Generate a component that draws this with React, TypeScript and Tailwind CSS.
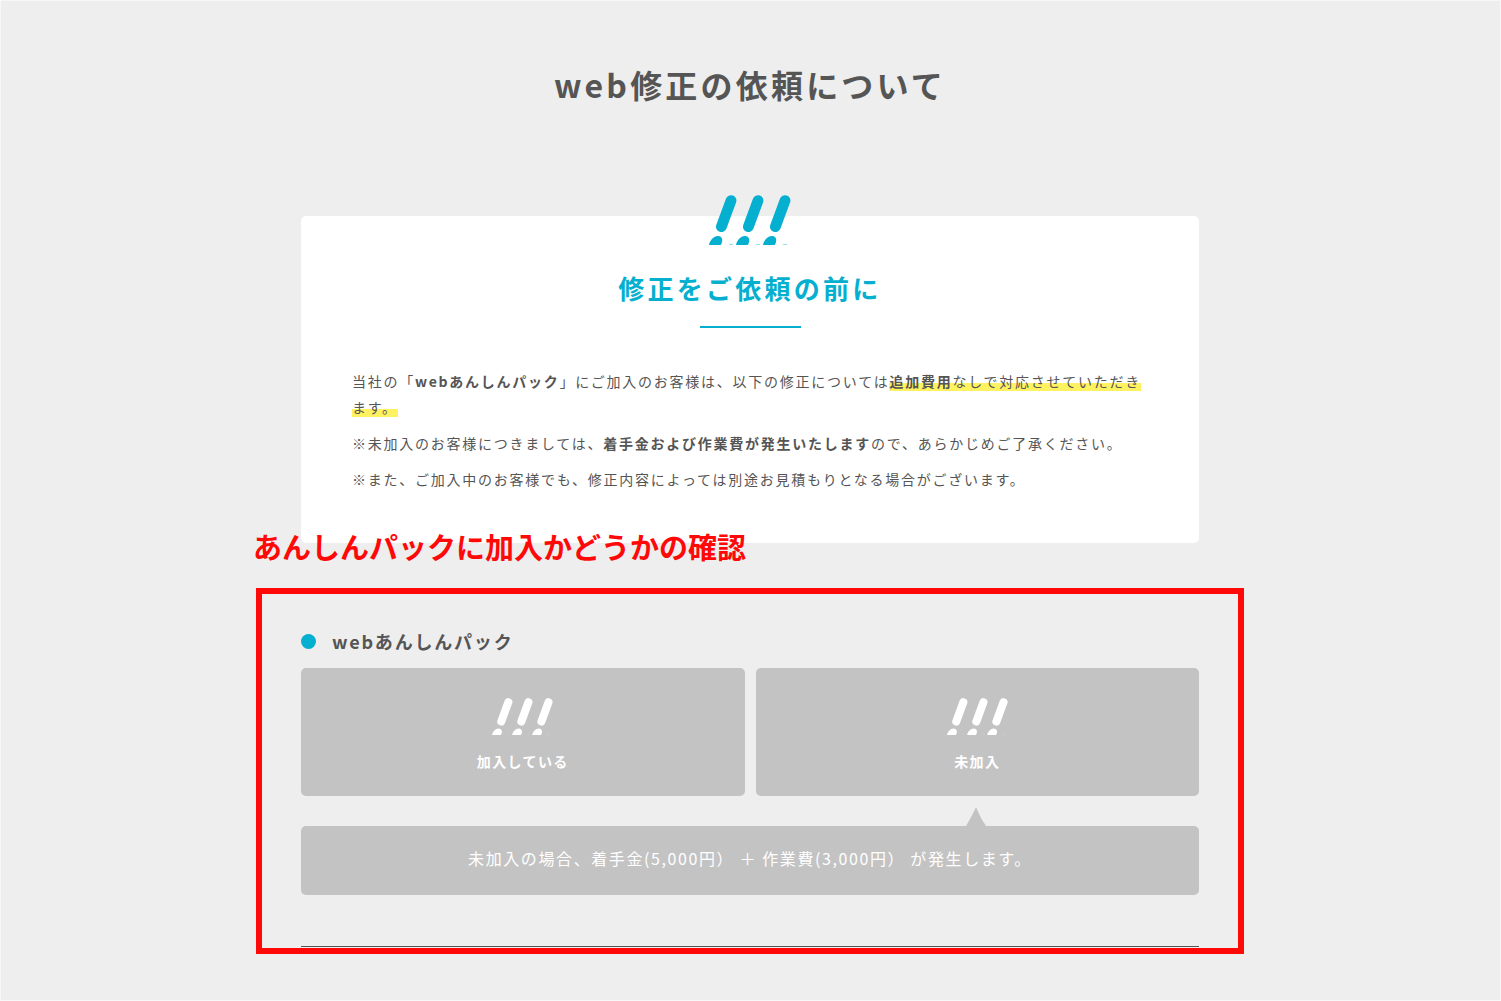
const notes = [
  {
    id: 'pack',
    body: (
      <>
        当社の「<b>webあんしんパック</b>
        」にご加入のお客様は、以下の修正については
        <span className="bg-linear-to-b from-transparent from-60% to-[#fff261] to-60%">
          <b>追加費用</b>なしで対応させていただきます。
        </span>
      </>
    ),
  },
  {
    id: 'fee',
    body: (
      <>
        ※未加入のお客様につきましては、<b>着手金および作業費が発生いたします</b>
        ので、あらかじめご了承ください。
      </>
    ),
  },
  {
    id: 'estimate',
    body: '※また、ご加入中のお客様でも、修正内容によっては別途お見積もりとなる場合がございます。',
  },
]

const choices = ['加入している', '未加入']

const MarksIcon = ({ className }: { className: string }) => (
  <svg viewBox="0 0 82 50" className={className} aria-hidden="true">
    {[0, 27, 54].map((x) => (
      <g key={x} transform={`translate(${x} 0)`}>
        <path
          d="M22 5.6 12.4 31.7"
          fill="none"
          stroke="currentColor"
          strokeWidth="10.8"
          strokeLinecap="round"
        />
        <path
          d="M0 50C.8 45.5 4.6 41 8.8 41 12 41 13.6 43.2 13.2 46 13 47.6 12.4 49 11.7 50Z"
          fill="currentColor"
        />
        <path d="M20 49.6h4v.4h-4Z" fill="currentColor" />
      </g>
    ))}
  </svg>
)

const App = () => {
  return (
    <main className="min-h-screen border border-[#f8f8f8] bg-[#eeeeee] pt-[59px] pr-16 pb-11 pl-[63px] font-['Noto_Sans_CJK_JP',sans-serif] text-[#555555]">
      <h1 className="text-center text-[32px] leading-[48px] font-bold tracking-widest">
        web修正の依頼について
      </h1>

      <div className="mx-auto mt-[108px] max-w-[898px]">
        <section className="relative rounded-[5px] bg-white px-[51px] pt-[54px] pb-[51px]">
          <MarksIcon className="absolute -top-[21px] left-1/2 w-[82px] -translate-x-1/2 text-[#05afcf]" />
          <h2 className="text-center text-[26px] leading-9 font-bold tracking-[0.125em] text-[#05afcf]">
            修正をご依頼の前に
          </h2>
          <div className="mx-auto mt-5 h-0.5 w-[101px] bg-[#05afcf]" />
          <div className="mt-10 space-y-2.5 text-sm leading-[26px] tracking-[0.125em]">
            {notes.map((note) => (
              <p key={note.id}>{note.body}</p>
            ))}
          </div>
        </section>

        <section className="relative -mx-[45px] mt-[45px] border-6 border-[#ff0808] px-[39px] pt-8">
          <p className="absolute -top-[66px] -left-[9px] text-[29px] leading-9 font-bold text-[#ff0808]">
            あんしんパックに加入かどうかの確認
          </p>
          <h3 className="flex items-center gap-4 text-lg leading-[30px] font-bold tracking-widest">
            <span className="size-[15px] rounded-full bg-[#05afcf]" />
            webあんしんパック
          </h3>
          <div className="mt-3 grid grid-cols-2 gap-[11px]">
            {choices.map((choice) => (
              <button
                key={choice}
                type="button"
                className="flex flex-col items-center rounded-[5px] bg-[#c3c3c3] pt-[30px] pb-[23px] text-sm leading-6 font-bold tracking-widest text-white"
              >
                <MarksIcon className="mb-3.5 w-[61px]" />
                {choice}
              </button>
            ))}
          </div>
          <div className="relative mt-[30px] rounded-[5px] bg-[#c3c3c3] px-4 pt-[18px] pb-[22px] text-center text-base leading-[29px] tracking-widest text-white">
            <svg
              viewBox="0 0 20 20"
              className="absolute bottom-full left-[74%] w-5 text-[#c3c3c3]"
              aria-hidden="true"
            >
              <path d="M10 1C12.5 7 16 14.5 20 20H0C4 13 7.5 7 10 1Z" fill="currentColor" />
            </svg>
            未加入の場合、着手金(5,000円） ＋ 作業費(3,000円） が発生します。
          </div>
          <hr className="mt-[51px] mb-px border-[#555555]" />
        </section>
      </div>
    </main>
  )
}

export default App
